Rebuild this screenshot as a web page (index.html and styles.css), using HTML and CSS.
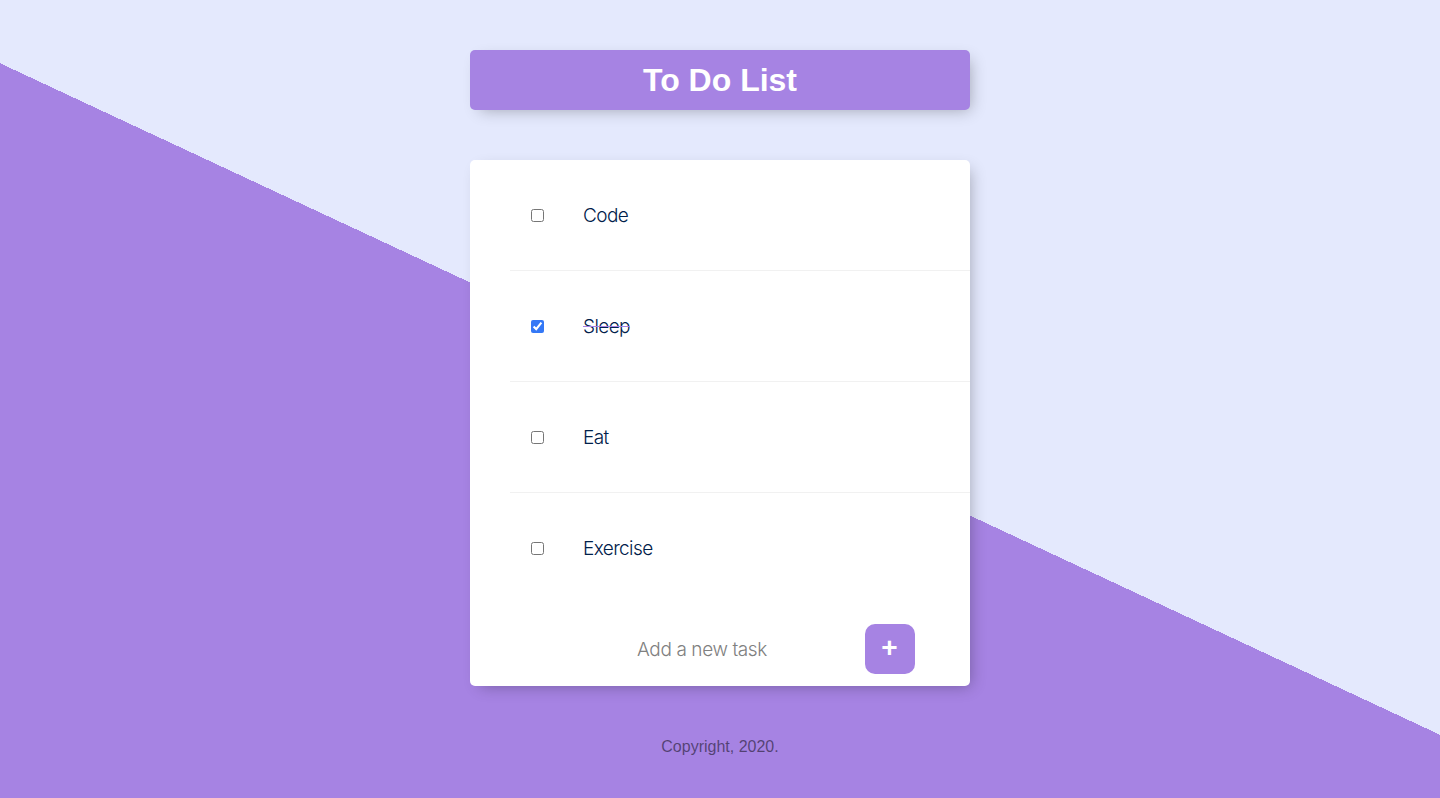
FILE: index.html
```html
<!DOCTYPE html>
<html lang="en">
<head>
<meta charset="utf-8">
<title>To Do List</title>
<link rel="stylesheet" href="styles.css">
</head>
<body>
  <div class="box heading">
    <h1>To Do List</h1>
  </div>
  <div class="box list">
    <div class="item"><input type="checkbox"><p>Code</p></div>
    <div class="item"><input type="checkbox" checked><p>Sleep</p></div>
    <div class="item"><input type="checkbox"><p>Eat</p></div>
    <div class="item"><input type="checkbox"><p>Exercise</p></div>
    <form class="add-form">
      <input type="text" name="newItem" placeholder="Add a new task" autocomplete="off">
      <button type="button" name="list">+</button>
    </form>
  </div>
  <footer>Copyright, 2020.</footer>
</body>
</html>
```
FILE: styles.css
```css
html {
  height: 100%;
  background-color: #E4E9FD;
  background-image: linear-gradient(25deg, #A683E3 50%, #E4E9FD 50%);
  font-family: "Liberation Sans", Arial, sans-serif;
}

body {
  margin: 0;
  padding-top: 50px;
}

.box {
  width: 500px;
  margin: 0 auto 50px;
  background: #fff;
  border-radius: 5px;
  box-shadow: 5px 5px 15px -5px rgba(0, 0, 0, 0.3);
}

.heading {
  background-color: #A683E3;
  text-align: center;
  height: 60px;
  display: flex;
  align-items: center;
  justify-content: center;
}

h1 {
  margin: 0;
  color: #fff;
  font-size: 32px;
  font-weight: 700;
  line-height: 60px;
}

.list {
  overflow: hidden;
}

.item {
  height: 110px;
  margin-left: 40px;
  display: flex;
  align-items: center;
  border-bottom: 1px solid #F1F1F1;
}

.item:nth-child(4) {
  border-bottom: 0;
  height: 111px;
}

.item input[type="checkbox"] {
  margin: 0 20px 0 21px;
  width: 13px;
  height: 13px;
  accent-color: #3478f6;
}

.item p {
  margin: 0;
  padding: 0 19px;
  font-family: "Inter", "Liberation Sans", sans-serif;
  font-size: 19px;
  font-weight: 260;
  letter-spacing: -0.6px;
  color: #00204a;
}

.item input:checked + p {
  text-decoration: line-through;
  text-decoration-color: #A683E3;
}

.add-form {
  display: flex;
  align-items: center;
  justify-content: center;
  margin-left: 20px;
  height: 82px;
  padding-top: 8px;
  box-sizing: border-box;
  gap: 6px;
}

.add-form input[type="text"] {
  text-align: center;
  height: 60px;
  width: 313px;
  padding: 0;
  border: none;
  background: transparent;
  font-family: "Inter", "Liberation Sans", sans-serif;
  font-size: 19px;
  font-weight: 300;
  letter-spacing: -0.4px;
  outline: none;
}

.add-form input::placeholder {
  color: #808080;
  opacity: 1;
}

.add-form button {
  width: 50px;
  height: 50px;
  border: 0;
  border-radius: 10px;
  background-color: #A683E3;
  color: #fff;
  font-family: "Liberation Sans", Arial, sans-serif;
  font-size: 28px;
  font-weight: 700;
  line-height: 1;
  padding: 0 0 3px;
  cursor: pointer;
}

footer {
  text-align: center;
  color: rgba(0, 0, 0, 0.5);
  font-size: 16px;
  margin-top: 52px;
}
```
